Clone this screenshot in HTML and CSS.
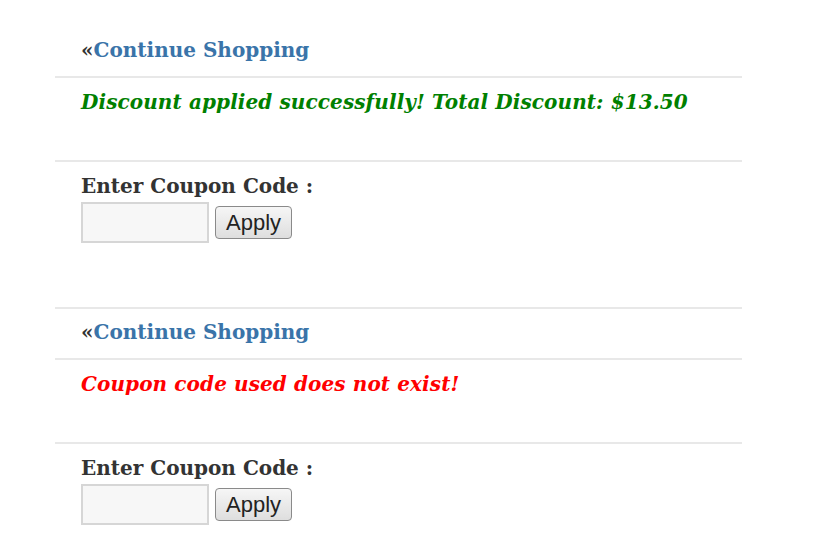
FILE: index.html
```html
<!DOCTYPE html>
<html lang="en">
<head>
    <meta charset="UTF-8">
    <title>Cart Coupon</title>
    <link rel="stylesheet" href="styles.css">
</head>
<body>
    <div class="cart">
        <div class="cart-block">
            <div class="continue"><span class="arrow">&laquo;</span><a href="#">Continue Shopping</a></div>
            <div class="notice success">Discount applied successfully! Total Discount: $13.50</div>
            <div class="coupon">
                <label for="coupon1">Enter Coupon Code :</label>
                <div class="coupon-row">
                    <input type="text" id="coupon1">
                    <button>Apply</button>
                </div>
            </div>
        </div>
        <div class="cart-block">
            <div class="continue"><span class="arrow">&laquo;</span><a href="#">Continue Shopping</a></div>
            <div class="notice error">Coupon code used does not exist!</div>
            <div class="coupon">
                <label for="coupon2">Enter Coupon Code :</label>
                <div class="coupon-row">
                    <input type="text" id="coupon2">
                    <button>Apply</button>
                </div>
            </div>
        </div>
    </div>
</body>
</html>
```

FILE: styles.css
```css
body {
    margin: 0;
    padding: 27px 0 0 55px;
    background: #fff;
    font-family: "DejaVu Serif", Georgia, serif;
    color: #333;
}
.cart {
    width: 687px;
}
.cart-block {
    border-bottom: 2px solid #e8e8e8;
}
.continue {
    padding: 10px 26px 13px;
    font-size: 20px;
    line-height: 26px;
    font-weight: bold;
    border-bottom: 2px solid #e8e8e8;
}
.continue .arrow {
    color: #333;
}
.continue a {
    color: #3a74a9;
    text-decoration: none;
}
.notice {
    padding: 11px 26px 45px;
    font-size: 20px;
    line-height: 26px;
    font-weight: bold;
    font-style: italic;
    letter-spacing: 0.1px;
    border-bottom: 2px solid #e8e8e8;
}
.success {
    color: #008000;
}
.error {
    color: #ff0000;
}
.coupon {
    padding: 11px 26px 64px;
}
.coupon label {
    display: block;
    font-size: 20px;
    line-height: 26px;
    font-weight: bold;
    color: #333;
}
.coupon-row {
    display: flex;
    align-items: center;
    margin-top: 3px;
}
.coupon-row input {
    width: 128px;
    height: 41px;
    box-sizing: border-box;
    border: 2px solid #d6d6d6;
    background: #f7f7f7;
    margin: 0 6px 0 0;
}
.coupon-row button {
    height: 33px;
    padding: 0 10px;
    font-family: "Liberation Sans", Arial, sans-serif;
    font-size: 22px;
    color: #222;
    background: linear-gradient(#f6f6f6, #dedede);
    border: 1px solid #8a8a8a;
    border-radius: 4px;
}
```
